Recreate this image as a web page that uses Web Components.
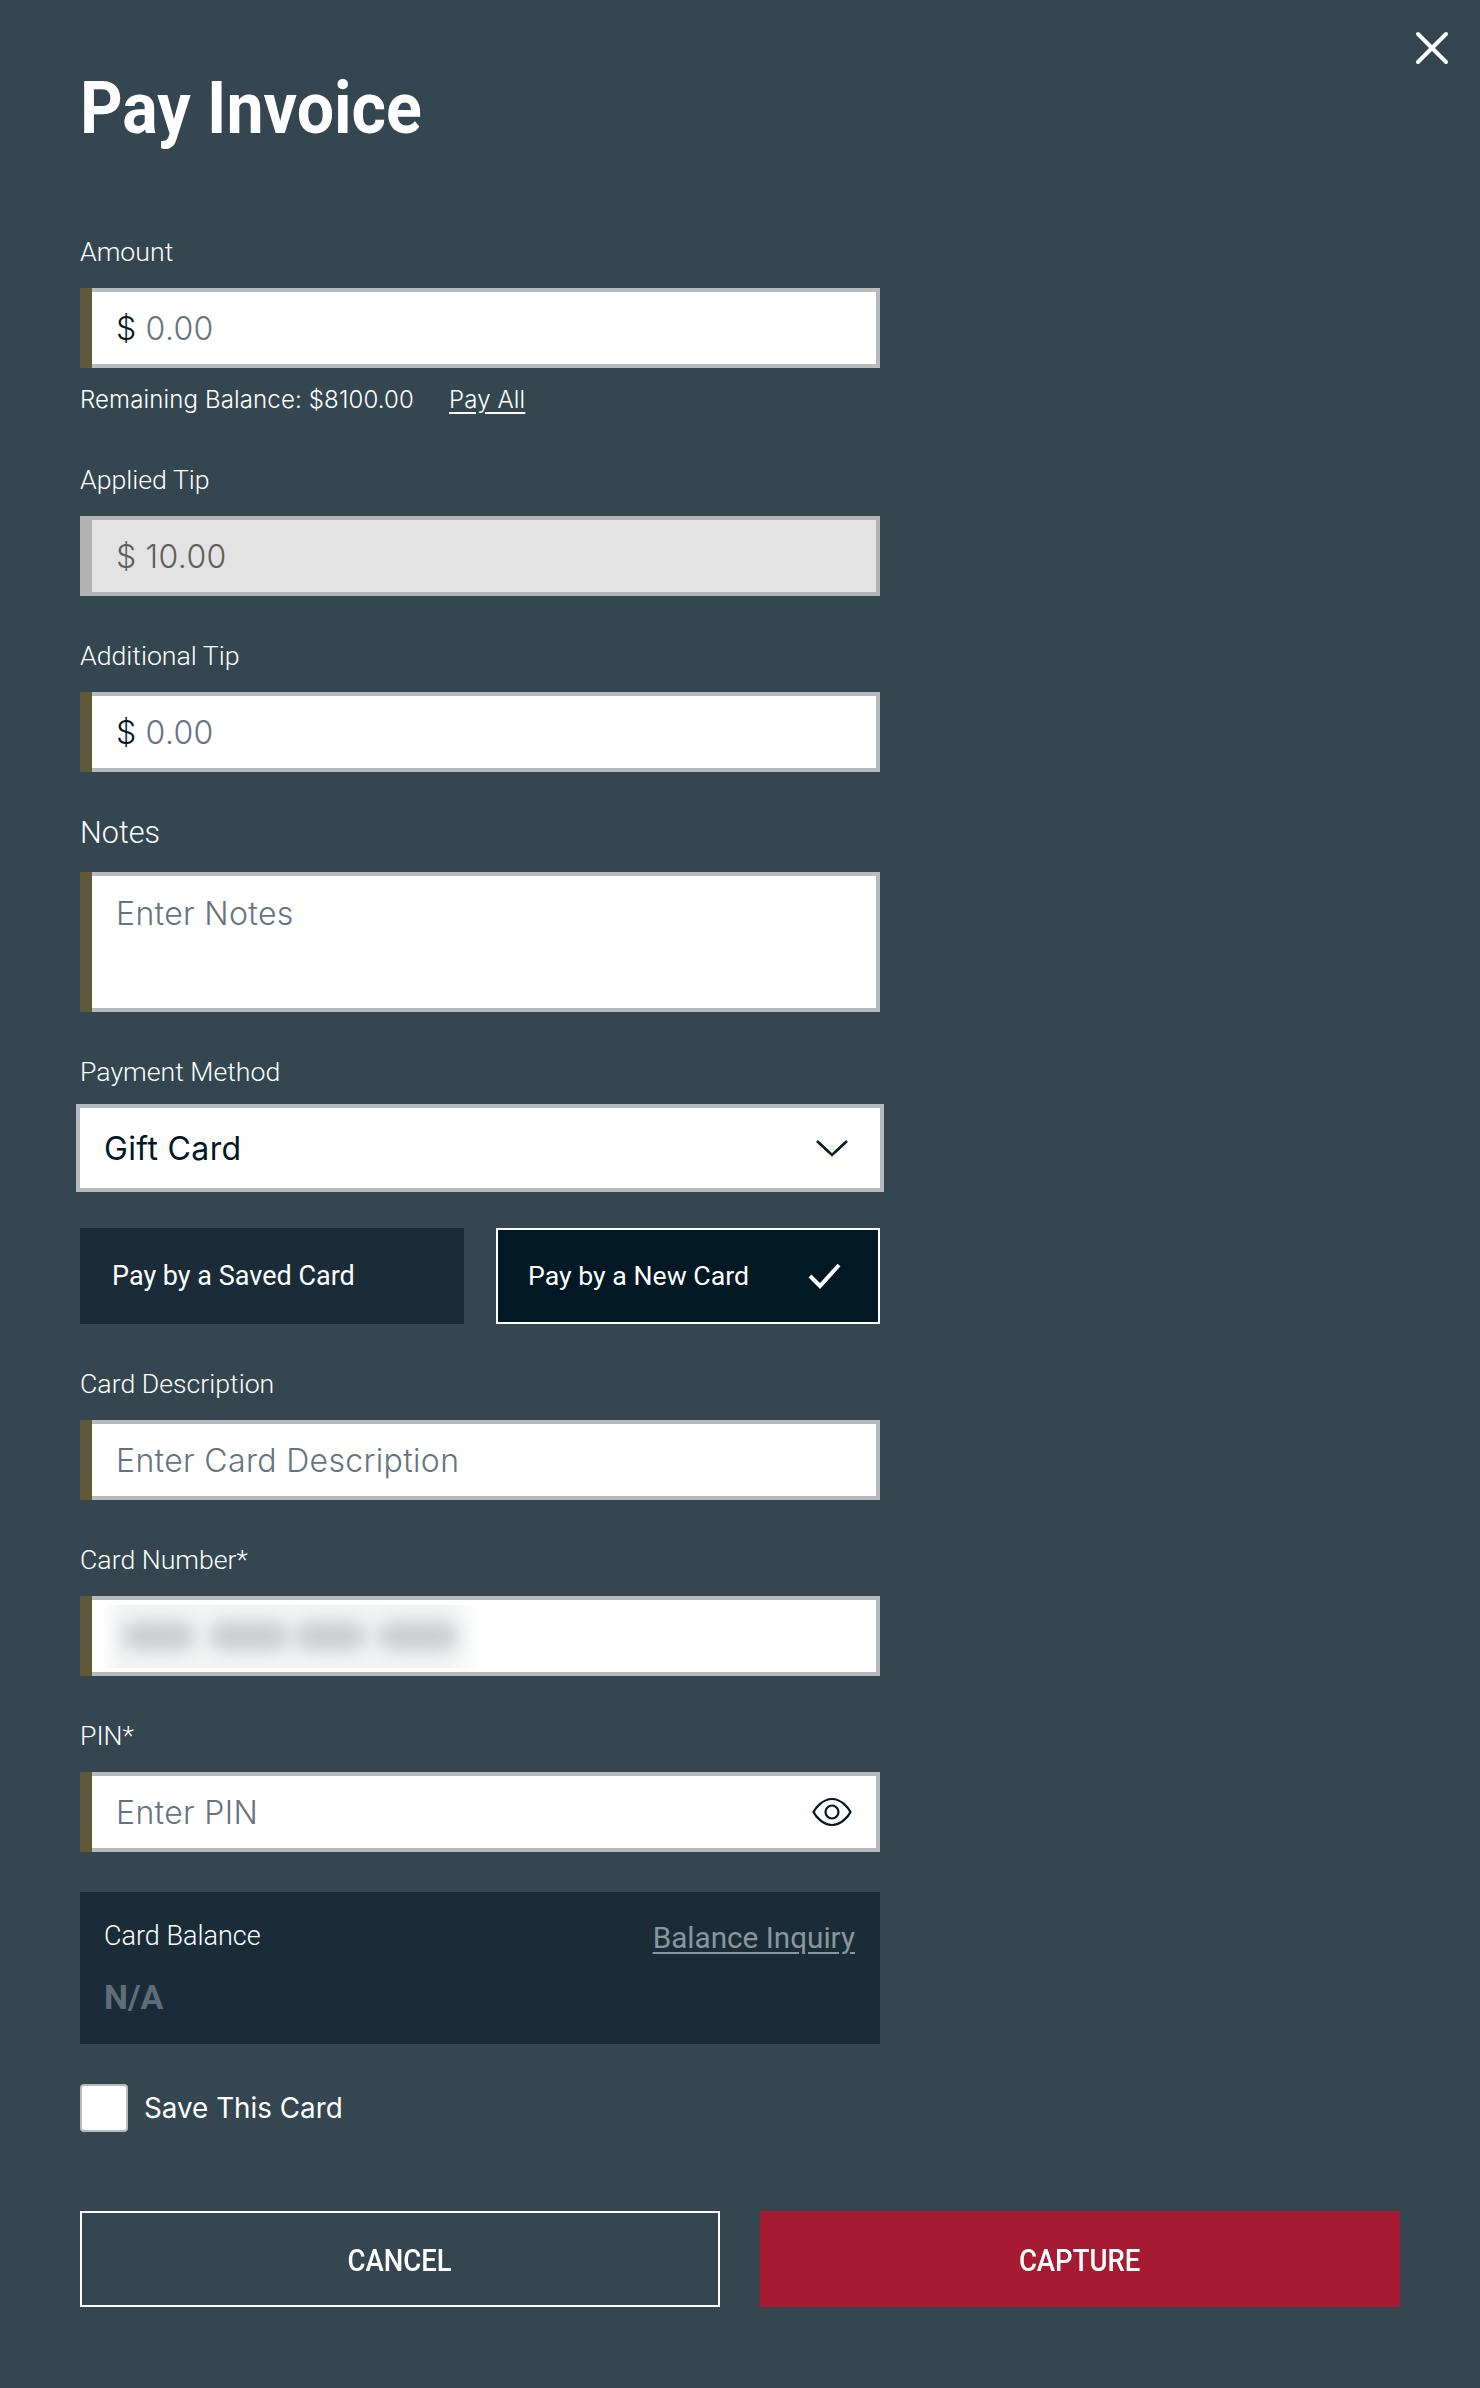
<!DOCTYPE html>
<html lang="en"><head><meta charset="utf-8"><title>Pay Invoice</title>
<style>
html,body{margin:0;padding:0;background:#344650}
</style></head>
<body>
<pay-invoice>
  <pay-title slot="title">Pay Invoice</pay-title>
  <pay-field label="Amount" class="f-amount"><pay-input prefix="$" placeholder="0.00"></pay-input>
    <pay-hint slot="after">Remaining Balance: $8100.00<a slot="link">Pay All</a></pay-hint></pay-field>
  <pay-field label="Applied Tip"><pay-input prefix="$" value="10.00" disabled></pay-input></pay-field>
  <pay-field label="Additional Tip"><pay-input prefix="$" placeholder="0.00"></pay-input></pay-field>
  <pay-field label="Notes" large><pay-input placeholder="Enter Notes" area></pay-input></pay-field>
  <pay-field label="Payment Method" tight><pay-select>Gift Card</pay-select></pay-field>
  <pay-toggles>
    <pay-toggle>Pay by a Saved Card</pay-toggle>
    <pay-toggle selected>Pay by a New Card</pay-toggle>
  </pay-toggles>
  <pay-field label="Card Description"><pay-input placeholder="Enter Card Description"></pay-input></pay-field>
  <pay-field label="Card Number*"><pay-input blurred></pay-input></pay-field>
  <pay-field label="PIN*"><pay-input placeholder="Enter PIN" eye></pay-input></pay-field>
  <pay-balance></pay-balance>
  <pay-check>Save This Card</pay-check>
  <pay-actions>
    <pay-button>CANCEL</pay-button>
    <pay-button primary>CAPTURE</pay-button>
  </pay-actions>
</pay-invoice>
<script>
const shadow=(el,html)=>{el.attachShadow({mode:'open'}).innerHTML=html;};
class PayInvoice extends HTMLElement{constructor(){super();shadow(this,`<style>
:host{display:block;position:relative;box-sizing:border-box;width:1480px;height:2388px;padding:0 80px;background:#344650;color:#fff;font-family:Inter,"Liberation Sans",sans-serif;overflow:hidden}
.close{position:absolute;left:1412px;top:28px;width:40px;height:40px}
.form{width:800px}
</style>
<svg class="close" viewBox="0 0 40 40"><path d="M6 6L34 34M34 6L6 34" stroke="#fff" stroke-width="4" stroke-linecap="round" fill="none"/></svg>
<slot name="title"></slot>
<div class="form"><slot></slot></div>`);}}
class PayTitle extends HTMLElement{constructor(){super();shadow(this,`<style>
:host{display:block;height:240px;box-sizing:border-box;padding-top:63px;font:700 72px/92px Roboto,sans-serif;color:#fff}
span{display:inline-block;transform:scaleX(.92);transform-origin:left;white-space:nowrap}
</style><span><slot></slot></span>`);}}
class PayField extends HTMLElement{constructor(){super();
 shadow(this,`<style>
:host{display:block;margin-bottom:48px}
:host(.f-amount){margin-bottom:56px}
:host([large]){margin-top:-2px;margin-bottom:48px}
label{display:block;font:300 26.7px/24px Roboto,sans-serif;color:#fff;margin-bottom:24px;white-space:nowrap}
:host([large]) label{font-size:30.6px;line-height:30px;margin-bottom:24px}
:host([tight]) label{margin-bottom:20px}
:host([tight]){margin-bottom:36px}
</style><label>${this.getAttribute('label')}</label><slot></slot><slot name="after"></slot>`);}}
class PayInput extends HTMLElement{constructor(){super();
 const p=this.getAttribute('prefix'),v=this.getAttribute('value'),ph=this.getAttribute('placeholder');
 const eye=this.hasAttribute('eye'),bl=this.hasAttribute('blurred');
 shadow(this,`<style>
:host{display:block;box-sizing:border-box;width:800px;height:80px;background:#5f5839;padding-left:12px;font:350 32px/40px Inter,sans-serif;letter-spacing:.35px;color:#647480}
:host([area]){height:140px}
:host([disabled]){background:#b3b3b3;color:#5e5e5e}
.box{display:flex;align-items:center;box-sizing:border-box;height:100%;background:#fff;border:4px solid #b4babd;border-left:0;padding:2px 24px 0 24px}
:host([area]) .box{align-items:flex-start;padding-top:18px}
:host([disabled]) .box{background:#e3e3e3;border-color:#b3b3b3}
.pre{color:#011825;margin-right:9px}
:host([disabled]) .pre{color:#5e5e5e}
.text{flex:1;white-space:nowrap}
svg{width:40px;height:30px;flex:none;margin-top:-2px}
.blur{margin:-2px 0 0 -15px;width:379px;height:63px;display:flex;align-items:center;padding:0 22px;box-sizing:border-box;background:linear-gradient(90deg,#fff,#f3f5f5 5%,#f3f5f5 92%,#fff)}
.blur i{display:block;height:28px;border-radius:14px;background:#c6cbcf;filter:blur(9px)}
</style><div class="box">${p?`<span class="pre">${p}</span>`:''}${bl?`<div class="blur"><i style="width:72px;margin-right:14px"></i><i style="width:80px;margin-right:6px"></i><i style="width:72px;margin-right:12px"></i><i style="width:80px"></i></div>`:`<span class="text">${v||ph||''}</span>`}${eye?`<svg viewBox="0 0 40 30"><path d="M1.5 15C3 12 10 2 20 2S37 12 38.5 15C37 18 30 28 20 28S3 18 1.5 15Z" fill="none" stroke="#011825" stroke-width="2.2"/><circle cx="20" cy="15" r="6.5" fill="none" stroke="#011825" stroke-width="2.2"/></svg>`:''}</div>`);}}
class PayHint extends HTMLElement{constructor(){super();shadow(this,`<style>
:host{display:flex;gap:35px;margin-top:20px;font:350 24px/24px Inter,sans-serif;color:#fff;white-space:nowrap;letter-spacing:.14px}
::slotted(a){text-decoration:underline;text-underline-offset:4px}
</style><span><slot></slot></span><slot name="link"></slot>`);}}
class PaySelect extends HTMLElement{constructor(){super();shadow(this,`<style>
:host{display:flex;align-items:center;justify-content:space-between;box-sizing:border-box;width:808px;height:88px;margin:0 -4px;border:4px solid #b4babd;background:#fff;padding:0 32px 0 24px;font:400 32px/40px Inter,sans-serif;letter-spacing:.35px;color:#011825}
span{padding-top:2px}
svg{width:32px;height:18px}
</style><span><slot></slot></span><svg viewBox="0 0 32 18"><path d="M1 2L16 16L31 2" fill="none" stroke="#011825" stroke-width="2.6"/></svg>`);}}
class PayToggles extends HTMLElement{constructor(){super();shadow(this,`<style>
:host{display:flex;justify-content:space-between;margin-bottom:48px}
</style><slot></slot>`);}}
class PayToggle extends HTMLElement{constructor(){super();const s=this.hasAttribute('selected');shadow(this,`<style>
:host{display:flex;align-items:center;justify-content:space-between;box-sizing:border-box;width:384px;height:96px;padding:0 36px 0 32px;background:#1a2c38;font:400 27px/32px Roboto,sans-serif;color:#fff;white-space:nowrap}
:host([selected]){background:#011825;border:2px solid #fff;padding:0 36px 0 30px;font-size:26.7px}
svg{width:34px;height:26px}
</style><span><slot></slot></span>${s?`<svg viewBox="0 0 34 26"><path d="M2 13L12 23L31 2" fill="none" stroke="#fff" stroke-width="4"/></svg>`:''}`);}}
class PayBalance extends HTMLElement{constructor(){super();shadow(this,`<style>
:host{display:grid;grid-template-columns:1fr auto;align-content:start;box-sizing:border-box;width:800px;height:152px;padding:30px 25px 0 24px;background:#1a2c38;margin-top:-8px}
.l{font:300 27px/28px Roboto,sans-serif;color:#fff}
.i{font:400 29.7px/32px Roboto,sans-serif;color:#8a969d;text-decoration:underline;text-underline-offset:4px}
.n{grid-column:1/3;margin-top:24px;font:700 34px/38px Roboto,sans-serif;color:#5e6e78}
</style><span class="l">Card Balance</span><span class="i">Balance Inquiry</span><span class="n">N/A</span>`);}}
class PayCheck extends HTMLElement{constructor(){super();shadow(this,`<style>
:host{display:flex;align-items:center;gap:16px;margin-top:40px;font:400 27.8px/32px Inter,sans-serif;color:#fff;white-space:nowrap}
i{display:block;box-sizing:border-box;width:48px;height:48px;background:#fff;border:2px solid #b4babd;border-radius:4px}
</style><i></i><span><slot></slot></span>`);}}
class PayActions extends HTMLElement{constructor(){super();shadow(this,`<style>
:host{display:flex;gap:40px;width:1320px;margin-top:79px}
</style><slot></slot>`);}}
class PayButton extends HTMLElement{constructor(){super();shadow(this,`<style>
:host{display:flex;align-items:center;justify-content:center;box-sizing:border-box;width:640px;height:96px;border:2px solid #fff;padding-top:2px;font:500 32px/40px Roboto,sans-serif;color:#fff}
:host([primary]){background:#a61a32;border-color:#a61a32}
span{display:inline-block;transform:scaleX(.86)}
</style><span><slot></slot></span>`);}}
for(const [n,c] of Object.entries({'pay-title':PayTitle,'pay-field':PayField,'pay-input':PayInput,'pay-hint':PayHint,'pay-select':PaySelect,'pay-toggles':PayToggles,'pay-toggle':PayToggle,'pay-balance':PayBalance,'pay-check':PayCheck,'pay-actions':PayActions,'pay-button':PayButton,'pay-invoice':PayInvoice}))customElements.define(n,c);
</script>
</body></html>
